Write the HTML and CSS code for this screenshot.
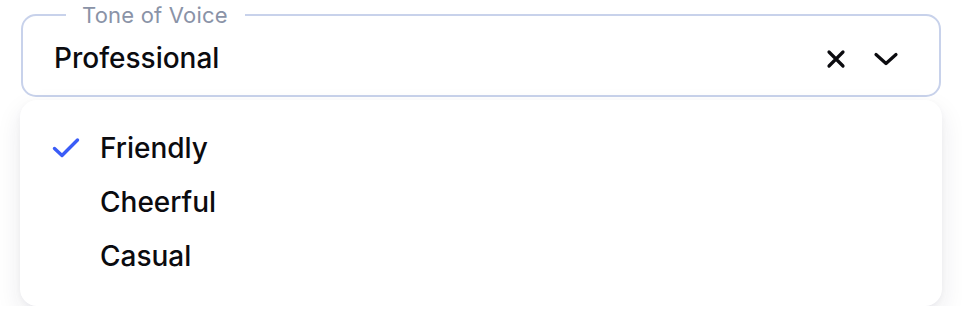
FILE: index.html
```html
<!DOCTYPE html>
<html lang="en">
<head>
<meta charset="utf-8">
<title>Tone of Voice</title>
<link rel="stylesheet" href="styles.css">
</head>
<body>
<div class="select">
  <fieldset class="field">
    <legend class="label">Tone of Voice</legend>
    <div class="control">
      <span class="value">Professional</span>
      <div class="actions">
        <svg class="icon clear" width="20" height="20" viewBox="0 0 20 20" aria-hidden="true">
          <path d="M3 3 L17 17 M17 3 L3 17" fill="none" stroke="#0b0b0f" stroke-width="3.2" stroke-linecap="round"/>
        </svg>
        <svg class="icon chevron" width="26" height="16" viewBox="0 0 26 16" aria-hidden="true">
          <path d="M3 3.5 L13 12.5 L23 3.5" fill="none" stroke="#0b0b0f" stroke-width="3.2" stroke-linecap="round" stroke-linejoin="round"/>
        </svg>
      </div>
    </div>
  </fieldset>
  <ul class="menu">
    <li class="option selected">
      <span class="check">
        <svg width="28" height="22" viewBox="0 0 28 22" aria-hidden="true">
          <path d="M2.5 11.5 L10 18.5 L25.5 3" fill="none" stroke="#3a5cf7" stroke-width="3.4" stroke-linecap="round" stroke-linejoin="round"/>
        </svg>
      </span>
      <span class="text">Friendly</span>
    </li>
    <li class="option"><span class="check"></span><span class="text">Cheerful</span></li>
    <li class="option"><span class="check"></span><span class="text">Casual</span></li>
  </ul>
</div>
</body>
</html>
```
FILE: styles.css
```css
* { box-sizing: border-box; }
html, body {
  margin: 0;
  background: #ffffff;
}
body {
  font-family: Inter, "Liberation Sans", sans-serif;
  color: #0b0b0f;
  padding: 2px 20px 0 20px;
}
.select {
  width: 922px;
}
.field {
  margin: 0 1px;
  padding: 0 40px 0 31px;
  border: 2px solid #c8d2eb;
  border-radius: 15px;
  height: 95px;
  min-width: 0;
}
.label {
  margin-left: 12px;
  padding: 0 17px 0 16px;
  font-size: 22px;
  line-height: 26px;
  letter-spacing: 0.2px;
  color: #8a93a7;
}
.control {
  display: flex;
  align-items: center;
  height: 68px;
  margin-top: -4px;
}
.value {
  flex: 1;
  font-size: 28px;
  font-weight: 500;
}
.actions {
  display: flex;
  align-items: center;
  gap: 27px;
  margin-top: 2px;
}
.icon { display: block; }
.menu {
  list-style: none;
  margin: 3px 0 0 0;
  padding: 21px 32px 23px 32px;
  background: #ffffff;
  border-radius: 17px;
  box-shadow: 0 10px 26px rgba(30, 36, 70, 0.09), 0 2px 6px rgba(30, 36, 70, 0.04);
}
.option {
  display: flex;
  align-items: center;
  height: 54px;
}
.check {
  width: 48px;
  display: flex;
  align-items: center;
}
.text {
  font-size: 28px;
  font-weight: 500;
}
```
